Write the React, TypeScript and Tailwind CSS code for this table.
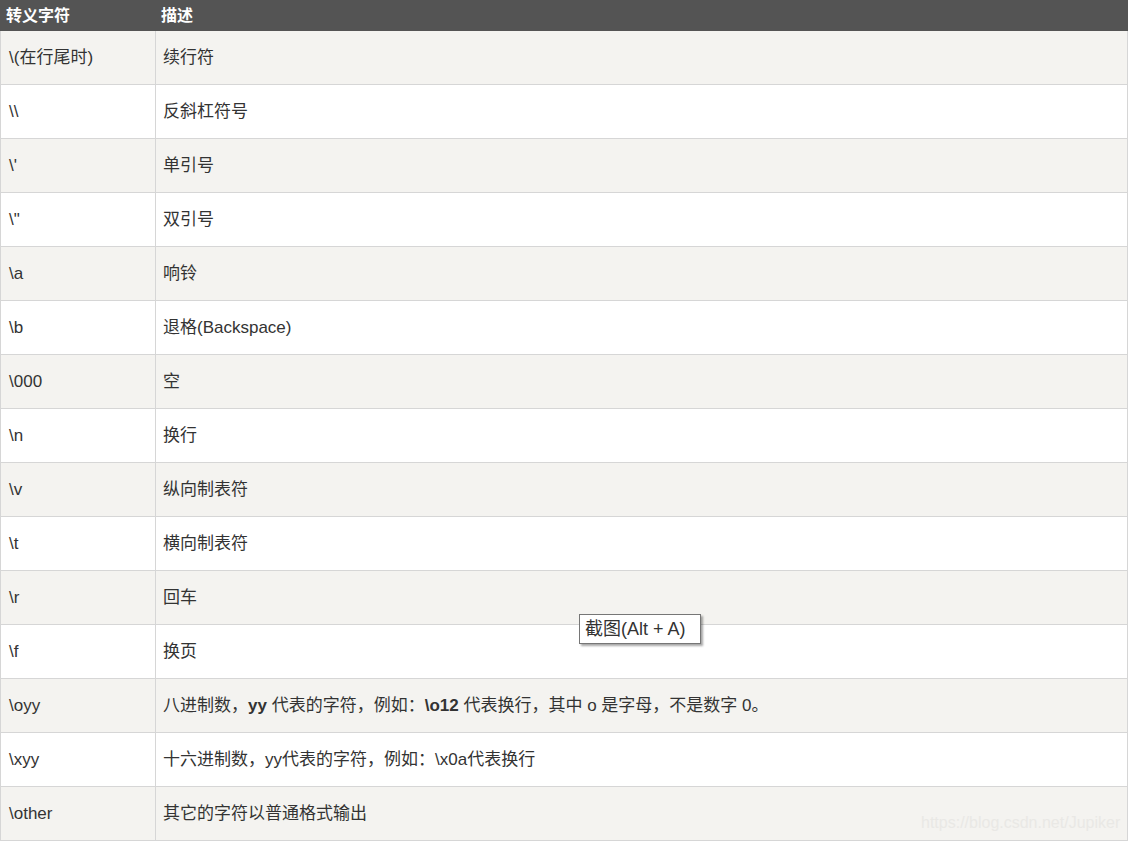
import React from "react";

const rows: { code: string; desc: React.ReactNode }[] = [
  { code: "\\(在行尾时)", desc: "续行符" },
  { code: "\\\\", desc: "反斜杠符号" },
  { code: "\\'", desc: "单引号" },
  { code: '\\"', desc: "双引号" },
  { code: "\\a", desc: "响铃" },
  { code: "\\b", desc: "退格(Backspace)" },
  { code: "\\000", desc: "空" },
  { code: "\\n", desc: "换行" },
  { code: "\\v", desc: "纵向制表符" },
  { code: "\\t", desc: "横向制表符" },
  { code: "\\r", desc: "回车" },
  { code: "\\f", desc: "换页" },
  {
    code: "\\oyy",
    desc: (
      <>
        八进制数，<b>yy</b> 代表的字符，例如：<b>\o12</b> 代表换行，其中 o 是字母，不是数字 0。
      </>
    ),
  },
  { code: "\\xyy", desc: "十六进制数，yy代表的字符，例如：\\x0a代表换行" },
  { code: "\\other", desc: "其它的字符以普通格式输出" },
];

export default function App() {
  return (
    <main
      className="relative h-[841px] w-[1128px] overflow-hidden bg-white text-[17px] text-[#333]"
      style={{ fontFamily: '"Liberation Sans", "Noto Sans CJK SC", sans-serif' }}
    >
      <div className="flex h-[31px] items-center bg-[#545454] text-[16px] font-bold text-white">
        <div className="w-[156px] pl-[6px]">转义字符</div>
        <div className="pl-[5px]">描述</div>
      </div>

      {rows.map((row, i) => (
        <div
          key={i}
          className={`flex h-[54px] border-b border-l border-r border-[#d6d6d6] ${
            i % 2 === 0 ? "bg-[#f4f3f0]" : "bg-white"
          }`}
        >
          <div className="flex w-[155px] items-center border-r border-[#d6d6d6] pl-[8px]">
            {row.code}
          </div>
          <div className="flex items-center pl-[7px]">
            <span>{row.desc}</span>
          </div>
        </div>
      ))}

      <div className="absolute left-[579px] top-[614px] flex h-[30px] w-[122px] items-center whitespace-pre border border-[#767676] bg-white pl-[5px] text-[18px] text-[#333] shadow-[2px_2px_2px_rgba(0,0,0,0.35)]">
        截图(Alt + A)
      </div>

      <div className="absolute left-[921px] top-[811px] text-[16px] text-[#e9e8e5]">
        https://blog.csdn.net/Jupiker
      </div>
    </main>
  );
}
